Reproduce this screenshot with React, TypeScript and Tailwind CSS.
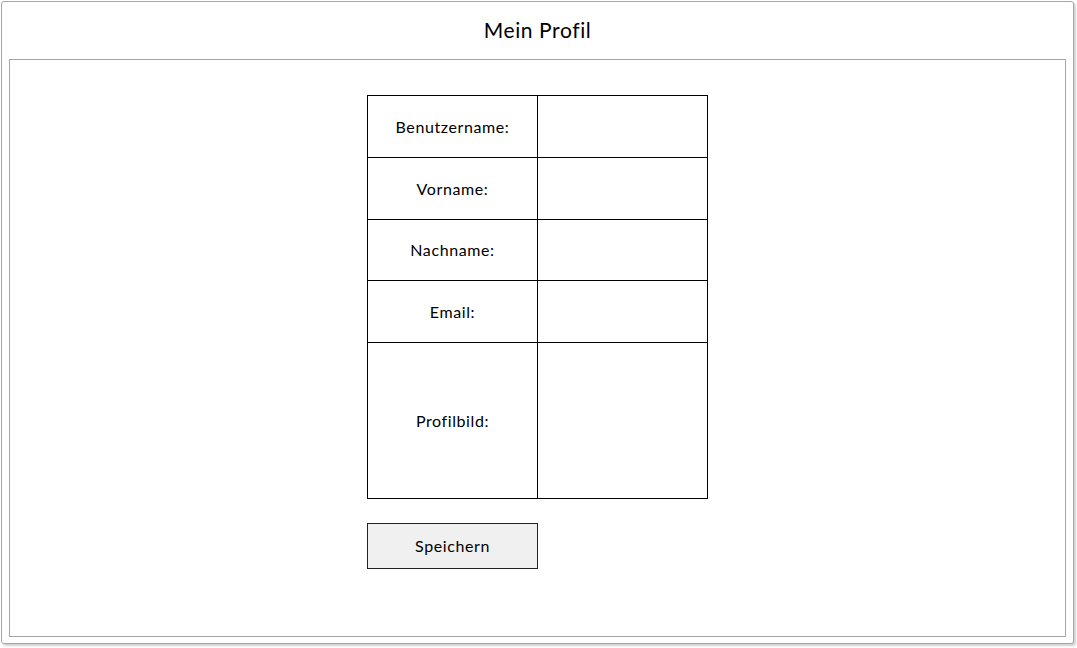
import React from "react";

const rows: { label: string; h: string }[] = [
  { label: "Benutzername:", h: "h-[61px]" },
  { label: "Vorname:", h: "h-[62px]" },
  { label: "Nachname:", h: "h-[61px]" },
  { label: "Email:", h: "h-[62px]" },
  { label: "Profilbild:", h: "h-[156px]" },
];

export default function App() {
  return (
    <div
      className="w-[1077px] h-[648px] bg-white pl-[1px] pt-[1px] [font-variant-ligatures:none]"
      style={{ fontFamily: "Lato, 'Open Sans', sans-serif" }}
    >
      <div className="w-[1073px] h-[643px] border border-[#a6a6a6] rounded-[3px] bg-white shadow-[2px_2px_2px_rgba(0,0,0,0.18)] flex flex-col">
        <div className="h-[57px] flex items-center justify-center text-[21px] tracking-[0.6px] text-black pb-[2px]">Mein Profil</div>
        <div className="flex-1 mx-[7px] mb-[6px] border border-[#a6a6a6] flex flex-col items-center pt-[35px]">
          <div className="w-[341px]">
            <div className="border border-black">
              {rows.map((r, i) => (
                <div key={r.label} className={`flex ${r.h} ${i > 0 ? "border-t border-black" : ""}`}>
                  <div className="w-[170px] border-r border-black flex items-center justify-center text-[16px] tracking-[0.6px] text-black">
                    {r.label}
                  </div>
                  <div className="flex-1" />
                </div>
              ))}
            </div>
            <button className="mt-[24px] w-[171px] h-[46px] border border-[#222] bg-[#f0f0f0] text-[16px] tracking-[0.6px] text-black flex items-center justify-center">
              Speichern
            </button>
          </div>
        </div>
      </div>
    </div>
  );
}
